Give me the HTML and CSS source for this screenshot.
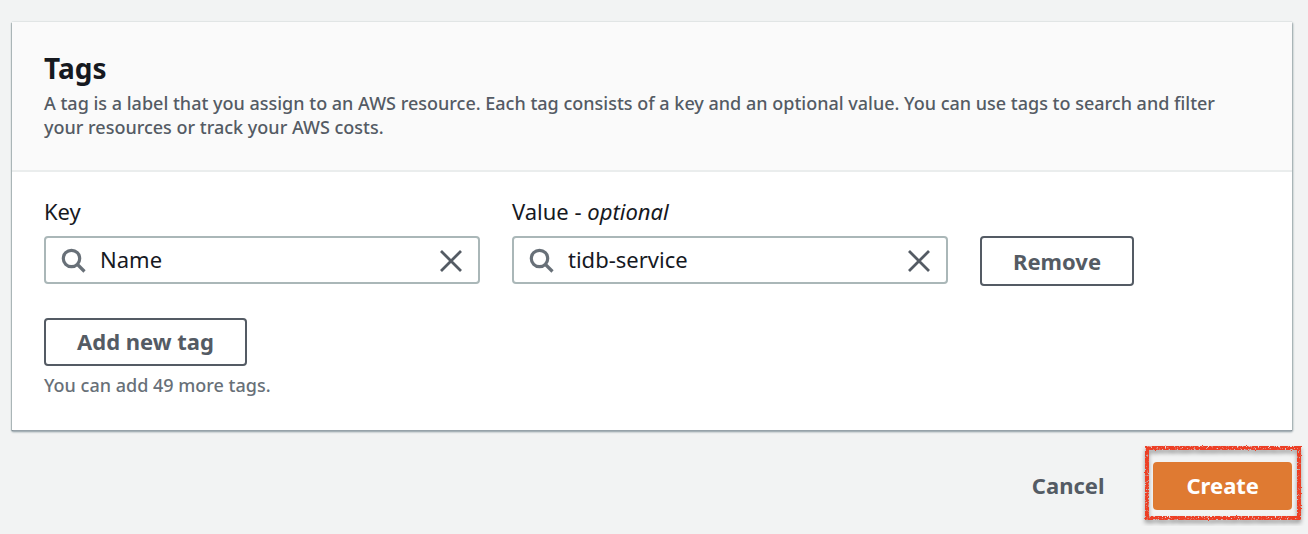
FILE: index.html
```html
<!DOCTYPE html>
<html lang="en">
<head>
<meta charset="utf-8">
<meta name="viewport" content="width=device-width, initial-scale=1">
<title>Tags</title>
<link rel="stylesheet" href="styles.css">
</head>
<body>
<form class="page">
  <section class="card">
    <header class="card-header">
      <h2 class="card-title">Tags</h2>
      <p class="card-description">A tag is a label that you assign to an AWS resource. Each tag consists of a key and an optional value. You can use tags to search and filter your resources or track your AWS costs.</p>
    </header>
    <div class="card-body">
      <div class="tag-row">
        <div class="field">
          <label class="label" for="tag-key">Key</label>
          <div class="search-box">
            <svg class="icon" viewBox="0 0 24 24" aria-hidden="true"><circle cx="9.5" cy="10.5" r="8.2"/><path d="M15.5 16.5l7 7"/></svg>
            <input class="search-input" id="tag-key" type="text" value="Name">
            <button class="clear" type="button" aria-label="Clear key"><svg class="icon icon-close" viewBox="0 0 24 24" aria-hidden="true"><path d="M3 3l20 20M23 3L3 23"/></svg></button>
          </div>
        </div>
        <div class="field">
          <label class="label" for="tag-value">Value - <em>optional</em></label>
          <div class="search-box">
            <svg class="icon" viewBox="0 0 24 24" aria-hidden="true"><circle cx="9.5" cy="10.5" r="8.2"/><path d="M15.5 16.5l7 7"/></svg>
            <input class="search-input" id="tag-value" type="text" value="tidb-service">
            <button class="clear" type="button" aria-label="Clear value"><svg class="icon icon-close" viewBox="0 0 24 24" aria-hidden="true"><path d="M3 3l20 20M23 3L3 23"/></svg></button>
          </div>
        </div>
        <div class="row-action">
          <button class="button button-remove" type="button">Remove</button>
        </div>
      </div>
      <button class="button" type="button">Add new tag</button>
      <p class="hint">You can add 49 more tags.</p>
    </div>
  </section>
  <footer class="actions">
    <button class="button button-link" type="button">Cancel</button>
    <div class="highlight">
      <button class="button button-primary" type="submit">Create</button>
      <svg class="highlight-frame" viewBox="0 0 158 76" aria-hidden="true">
        <defs>
          <filter id="chalk" filterUnits="userSpaceOnUse" x="-10" y="-10" width="180" height="100" color-interpolation-filters="sRGB">
            <feTurbulence type="fractalNoise" baseFrequency="0.7" numOctaves="2" seed="4" result="noise"/>
            <feDisplacementMap in="SourceGraphic" in2="noise" scale="2" xChannelSelector="R" yChannelSelector="G" result="rough"/>
            <feColorMatrix in="noise" type="matrix" values="0 0 0 0 0  0 0 0 0 0  0 0 0 0 0  0 0 -6 0 4.5" result="grain"/>
            <feComposite in="rough" in2="grain" operator="in" result="chalked"/>
            <feDropShadow in="chalked" dx="0" dy="3" stdDeviation="2" flood-color="#000" flood-opacity="0.4"/>
          </filter>
        </defs>
        <rect x="3" y="3" width="152" height="70" fill="none" stroke="#ed3f25" stroke-width="4" filter="url(#chalk)"/>
      </svg>
    </div>
  </footer>
</form>
</body>
</html>
```
FILE: styles.css
```css
* {
  box-sizing: border-box;
}

body {
  margin: 0;
  background: #f2f3f3;
  color: #16191f;
  font-family: "Noto Sans", "Open Sans", sans-serif;
  font-size: 22px;
  line-height: 30px;
}

.page {
  padding: 22px 16px 16px 12px;
}

.card {
  background: #fff;
  box-shadow: 0 2px 2px #9ba7ad, 0 1px 1px #687078, 1px 1px 2px #aab7b8, -1px 1px 1px #c3cccd, 0 -1px 1px #e6e9e9;
}

.card-header {
  padding: 28px 32px 31px;
  border-bottom: 2px solid #eaeded;
  background: #fafafa;
}

.card-title {
  margin: 0;
  font-size: 28px;
  line-height: 36px;
}

.card-description {
  margin: 5px 0 0;
  padding-right: 24px;
  color: #545b64;
  font-size: 18px;
  font-weight: 500;
  line-height: 24px;
}

.card-body {
  padding: 24px 32px 33px;
}

.tag-row {
  display: grid;
  grid-template-columns: 436fr 436fr 280fr;
  gap: 32px;
  margin-bottom: 32px;
}

.label {
  display: block;
  margin-bottom: 10px;
}

.search-box {
  display: flex;
  align-items: center;
  height: 48px;
  padding: 0 16px;
  border: 2px solid #aab7b8;
  border-radius: 4px;
}

.icon {
  display: block;
  flex: none;
  width: 24px;
  height: 24px;
  overflow: visible;
  fill: none;
  stroke: #687078;
  stroke-width: 3.2;
}

.icon-close {
  stroke: #545b64;
  stroke-width: 2.8;
}

.search-input {
  flex: 1;
  min-width: 0;
  padding: 0 14px 2px;
  border: 0;
  outline: 0;
  background: none;
  color: inherit;
  font: inherit;
}

.clear {
  padding: 0;
  border: 0;
  background: none;
}

.row-action {
  padding-top: 40px;
}

.button {
  height: 48px;
  padding: 0 31px 2px;
  border: 2px solid #545b64;
  border-radius: 4px;
  background: #fff;
  color: #545b64;
  font: inherit;
  font-weight: 700;
}

.button-remove {
  height: 50px;
  padding-bottom: 0;
}

.hint {
  margin: 7px 0 0;
  color: #687078;
  font-size: 18px;
  font-weight: 500;
  line-height: 24px;
}

.actions {
  display: flex;
  justify-content: flex-end;
  gap: 16px;
  padding-top: 32px;
}

.button-link {
  border-color: transparent;
  background: none;
}

.button-primary {
  border-color: #df7a32;
  background: #df7a32;
  color: #fff;
}

.highlight {
  position: relative;
}

.highlight-frame {
  position: absolute;
  top: -17px;
  right: -10px;
  width: 158px;
  height: 76px;
  overflow: visible;
  pointer-events: none;
}
```
